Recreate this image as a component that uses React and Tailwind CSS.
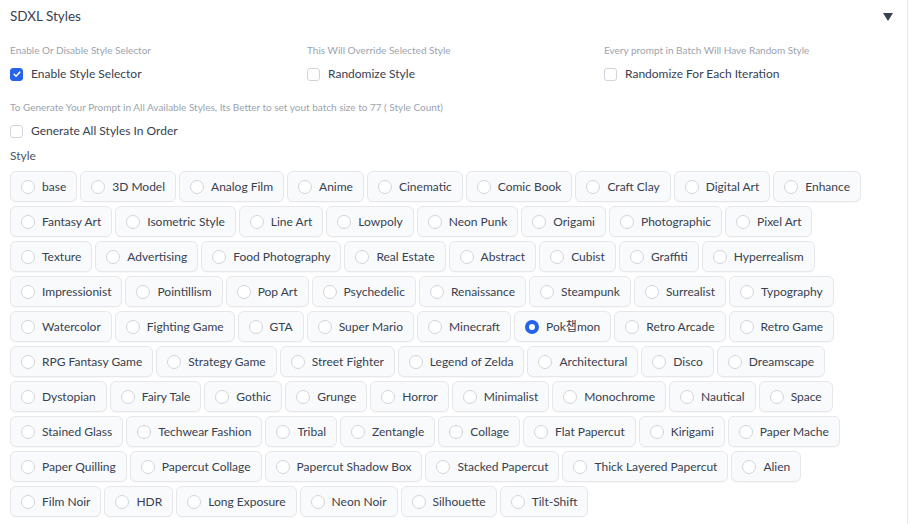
import React, { useState } from "react";

const STYLES = [
  "base", "3D Model", "Analog Film", "Anime", "Cinematic", "Comic Book", "Craft Clay", "Digital Art", "Enhance",
  "Fantasy Art", "Isometric Style", "Line Art", "Lowpoly", "Neon Punk", "Origami", "Photographic", "Pixel Art",
  "Texture", "Advertising", "Food Photography", "Real Estate", "Abstract", "Cubist", "Graffiti", "Hyperrealism",
  "Impressionist", "Pointillism", "Pop Art", "Psychedelic", "Renaissance", "Steampunk", "Surrealist", "Typography",
  "Watercolor", "Fighting Game", "GTA", "Super Mario", "Minecraft", "Pok챕mon", "Retro Arcade", "Retro Game",
  "RPG Fantasy Game", "Strategy Game", "Street Fighter", "Legend of Zelda", "Architectural", "Disco", "Dreamscape",
  "Dystopian", "Fairy Tale", "Gothic", "Grunge", "Horror", "Minimalist", "Monochrome", "Nautical", "Space",
  "Stained Glass", "Techwear Fashion", "Tribal", "Zentangle", "Collage", "Flat Papercut", "Kirigami", "Paper Mache",
  "Paper Quilling", "Papercut Collage", "Papercut Shadow Box", "Stacked Papercut", "Thick Layered Papercut", "Alien",
  "Film Noir", "HDR", "Long Exposure", "Neon Noir", "Silhouette", "Tilt-Shift",
];

function Checkbox({ checked, onChange, label }) {
  return (
    <label className="flex items-center gap-2 h-[20px] cursor-pointer text-[12px] text-[#374151]">
      <span
        onClick={onChange}
        className={`w-[13px] h-[13px] rounded-[3px] border flex items-center justify-center ${
          checked ? "bg-[#2563eb] border-[#2563eb]" : "bg-white border-[#d1d5db]"
        }`}
      >
        {checked && (
          <svg viewBox="0 0 16 16" className="w-[10px] h-[10px]" fill="none" stroke="white" strokeWidth="2.4">
            <path d="M3.5 8.5l3 3 6-6.5" strokeLinecap="round" strokeLinejoin="round" />
          </svg>
        )}
      </span>
      <span>{label}</span>
    </label>
  );
}

function Option({ title, info, checked, onChange }) {
  return (
    <div className="flex flex-col gap-[7px]">
      <div className="text-[10px] leading-[14px] text-[#9ca3af]">{info}</div>
      <Checkbox checked={checked} onChange={onChange} label={title} />
    </div>
  );
}

export default function App() {
  const [enabled, setEnabled] = useState(true);
  const [randomize, setRandomize] = useState(false);
  const [eachIter, setEachIter] = useState(false);
  const [allInOrder, setAllInOrder] = useState(false);
  const [style, setStyle] = useState("Pok챕mon");

  return (
    <div
      className="w-[908px] min-h-[524px] bg-white border-r border-[#e5e7eb] pl-[10px] pr-[10px]"
      style={{ fontFamily: 'Lato, "Noto Sans CJK KR", sans-serif' }}
    >
      {/* Accordion header */}
      <div className="h-[32px] flex items-center justify-between">
        <span className="text-[13.5px] text-[#374151]">SDXL Styles</span>
        <svg viewBox="0 0 10 8" className="w-[10px] h-[8px] mr-[4px] mt-[1px]">
          <path d="M0 0h10L5 8z" fill="#374151" />
        </svg>
      </div>

      {/* Toggles */}
      <div className="grid grid-cols-3 gap-x-1 mt-[11px]">
        <Option
          info="Enable Or Disable Style Selector"
          title="Enable Style Selector"
          checked={enabled}
          onChange={() => setEnabled(!enabled)}
        />
        <Option
          info="This Will Override Selected Style"
          title="Randomize Style"
          checked={randomize}
          onChange={() => setRandomize(!randomize)}
        />
        <Option
          info="Every prompt in Batch Will Have Random Style"
          title="Randomize For Each Iteration"
          checked={eachIter}
          onChange={() => setEachIter(!eachIter)}
        />
      </div>

      <div className="mt-[16px]">
        <Option
          info="To Generate Your Prompt in All Available Styles, Its Better to set yout batch size to 77 ( Style Count)"
          title="Generate All Styles In Order"
          checked={allInOrder}
          onChange={() => setAllInOrder(!allInOrder)}
        />
      </div>

      {/* Style radio group */}
      <div className="mt-[7px] text-[12px] leading-[16px] text-[#4b5563]">Style</div>
      <div className="mt-[7px] mr-[6px] flex flex-wrap gap-x-[3px] gap-y-[4px]">
        {STYLES.map((s) => {
          const active = s === style;
          return (
            <label
              key={s}
              onClick={() => setStyle(s)}
              className="h-[31px] flex items-center gap-[7px] px-[10px] rounded-[6px] border border-[#e5e7eb] bg-[#f9fafb] shadow-[0_1px_1px_rgba(0,0,0,0.03)] text-[12px] text-[#374151] cursor-pointer"
            >
              <span
                className={`w-[14px] h-[14px] rounded-full ${
                  active ? "border-[4px] border-[#2563eb] bg-white" : "border border-[#d1d5db] bg-white"
                }`}
              />
              <span>{s}</span>
            </label>
          );
        })}
      </div>
    </div>
  );
}
